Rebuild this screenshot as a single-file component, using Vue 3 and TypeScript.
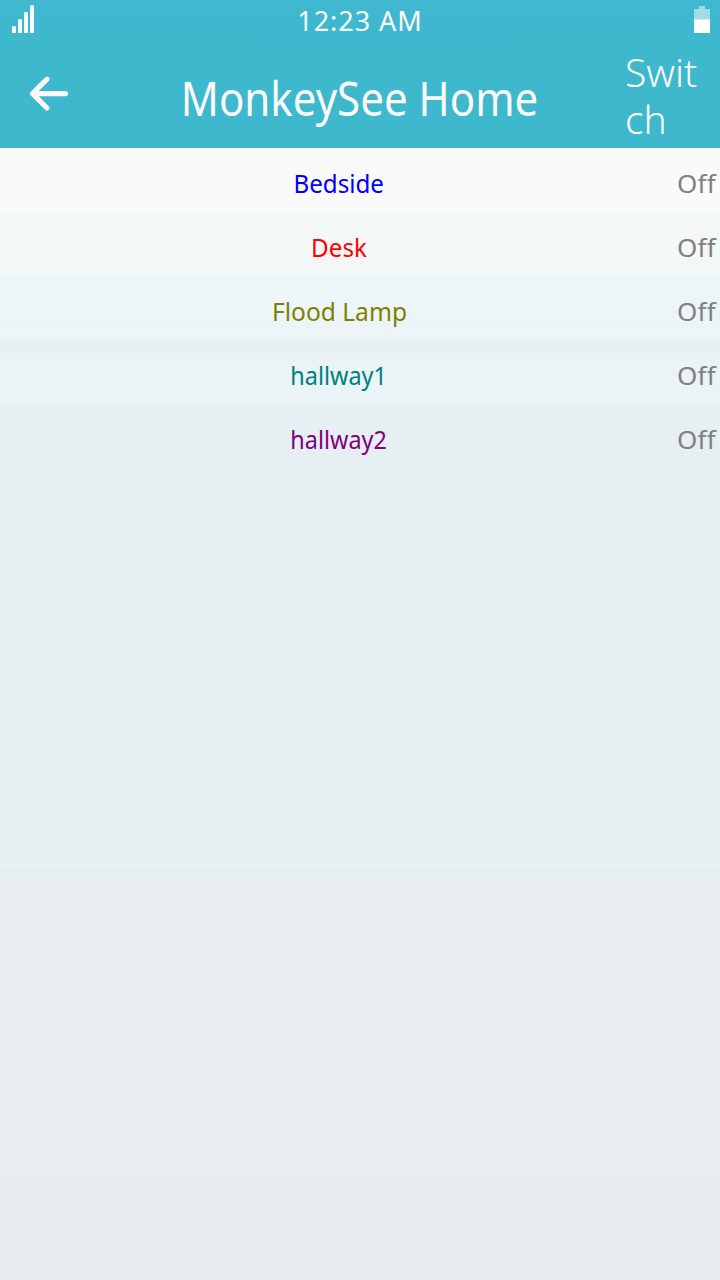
<script setup lang="ts">
interface Light {
  name: string
  state: string
  tone: string
}

const lights: Light[] = [
  { name: 'Bedside', state: 'Off', tone: 'blue' },
  { name: 'Desk', state: 'Off', tone: 'red' },
  { name: 'Flood Lamp', state: 'Off', tone: 'olive' },
  { name: 'hallway1', state: 'Off', tone: 'teal' },
  { name: 'hallway2', state: 'Off', tone: 'purple' },
]
</script>

<template>
  <main class="screen">
    <header class="top">
      <div class="status">
        <svg class="signal" width="24" height="29" viewBox="0 0 24 29">
          <path d="M0 21.3h4V28H0zM6 14.3h4V28H6zM12 7.3h4V28h-4zM18 .3h4V28h-4z" fill="#fafafa" />
        </svg>
        <span class="time">12:23 AM</span>
        <svg class="battery" width="16" height="28" viewBox="0 0 16 28">
          <path d="M5 0h6v3h5v11H0V3h5z" fill="#9edce6" />
          <path d="M0 13.5h16V27H0z" fill="#fff" />
        </svg>
      </div>
      <div class="bar">
        <button class="back" aria-label="Back">
          <svg width="42" height="38" viewBox="0 0 42 38">
            <path d="M19 4.2L4.5 18.6L19 33M5 18.6H37.5" fill="none" stroke="#fafafa" stroke-width="5.2" stroke-linecap="round" stroke-linejoin="round" />
          </svg>
        </button>
        <h1 class="title">MonkeySee Home</h1>
        <button class="switch"><span>Swit</span><span>ch</span></button>
      </div>
    </header>
    <ul class="list">
      <li v-for="light in lights" :key="light.name" class="row" :class="light.tone">
        <span class="name"><span class="label">{{ light.name }}</span></span>
        <span class="state">{{ light.state }}</span>
      </li>
    </ul>
    <div class="rest"></div>
  </main>
</template>

<style>
body { margin: 0; }
</style>

<style scoped>
.screen {
  width: 720px;
  height: 1280px;
  display: flex;
  flex-direction: column;
  overflow: hidden;
  font-family: "Noto Sans", "Open Sans", sans-serif;
  background: #e8ecf1;
}
.top { height: 148px; background: linear-gradient(#40b8d0, #3db8cc 60px); color: #fafafa; }
.status {
  height: 40px;
  display: grid;
  grid-template-columns: 60px 1fr 60px;
  justify-items: center;
}
.signal { justify-self: start; margin: 5px 0 0 12px; }
.battery { justify-self: end; margin: 6px 10px 0 0; }
.time { font-size: 27px; line-height: 41px; letter-spacing: 0.95px; white-space: nowrap; }
.bar { height: 108px; display: grid; grid-template-columns: 98px 1fr 98px; }
button { border: 0; padding: 0; background: none; color: inherit; font-family: inherit; text-align: left; }
.back { padding: 33px 0 0 28px; height: 75px; }
.back svg { display: block; }
.title {
  margin: 0 1px 0 0;
  text-align: center;
  white-space: nowrap;
  font-size: 48px;
  font-weight: 400;
  line-height: 115px;
  transform: scaleX(0.876);
}
.switch {
  display: flex;
  flex-direction: column;
  padding: 8px 0 0 3px;
  font-size: 39px;
  line-height: 47px;
  font-weight: 300;
}
.list { margin: 0; padding: 0; list-style: none; }
.row {
  height: 64px;
  display: grid;
  grid-template-columns: 677px 43px;
  font-size: 26px;
  line-height: 70px;
}
.name { padding-left: 1px; text-align: center; white-space: nowrap; }
.label { display: inline-block; transform: scaleX(0.93); }
.olive .label { transform: scaleX(0.945); }
.teal .label, .purple .label { transform: scaleX(0.9); }
.state { color: #808080; letter-spacing: 0.2px; }
.blue { color: #00f; background: #fafafa; }
.red { color: #f00; background: #f3f7f8; }
.olive { color: #808000; background: linear-gradient(#ebf5f7, #eef4f7); }
.teal { color: #008080; background: linear-gradient(#e7f1f3 0 12px, #eaf3f5 13px); }
.purple { color: #800080; background: #e6eff1; }
.rest {
  flex: 1;
  background: linear-gradient(#e5eef0 0 80px, #e7f0f2 88px 399px, #e8edf0 400px 711px, #e8ebf0 712px);
}
</style>
